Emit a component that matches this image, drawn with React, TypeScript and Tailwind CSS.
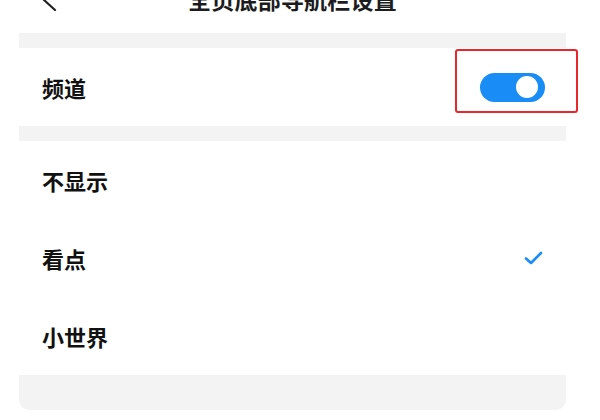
const font = { fontFamily: '"Noto Sans CJK SC", "Noto Sans", sans-serif' };

const Row = ({ label, checked }: { label: string; checked?: boolean }) => (
  <div className="h-[78px] flex items-center justify-between pl-[23px] pr-[23px] bg-white">
    <span className="text-[22px] font-bold leading-none text-[#111]">{label}</span>
    {checked && (
      <svg width="19" height="14" viewBox="0 0 19 14" fill="none">
        <path d="M2 7.5 L7 12 L17 2" stroke="#1a8cf5" strokeWidth="2.6" strokeLinecap="round" strokeLinejoin="round" />
      </svg>
    )}
  </div>
);

const App = () => {
  return (
    <div className="w-[600px] h-[420px] bg-white overflow-hidden" style={font}>
      {/* header, mostly cut off at the top */}
      <div className="ml-[19px] w-[547px] h-[33px] grid grid-cols-[1fr_auto_1fr] items-start">
        <svg className="ml-[22px] mt-[-12px]" width="16" height="24" viewBox="0 0 16 24" fill="none">
          <path d="M13 1 L3 12 L14 22" stroke="#222" strokeWidth="2.2" strokeLinecap="round" strokeLinejoin="round" />
        </svg>
        <h1 className="mt-[-12px] text-[23px] font-bold leading-none text-[#1c1c1e] tracking-[0.2px]">
          全页底部导航栏设置
        </h1>
        <div />
      </div>

      <div className="ml-[19px] w-[547px] bg-[#f3f3f3] rounded-b-[10px] pt-[15px] pb-[35px]">
        {/* channel switch */}
        <div className="relative h-[78px] flex items-center justify-between pl-[23px] pr-[21px] bg-white">
          <span className="text-[22px] font-bold leading-none text-[#111]">频道</span>
          <div className="w-[65px] h-[29px] rounded-full bg-[#1a8cf5] flex items-center justify-end pr-[7px]">
            <div className="w-[22px] h-[22px] rounded-full bg-white" />
          </div>
          <div className="absolute left-[436px] top-[1px] w-[123px] h-[64px] border-2 border-[#e8262b] rounded-[3px]" />
        </div>

        <div className="mt-[15px]">
          <Row label="不显示" />
          <Row label="看点" checked />
          <Row label="小世界" />
        </div>
      </div>
    </div>
  );
};

export default App;
